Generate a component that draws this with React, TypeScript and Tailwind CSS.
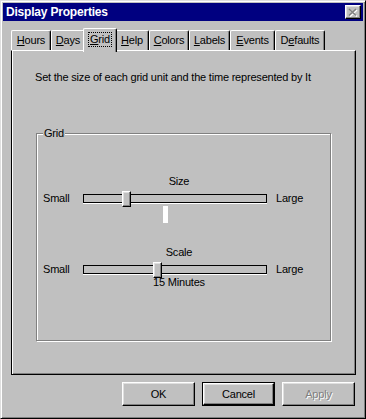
import React from "react";

const raised =
  "border border-t-white border-l-white border-r-black border-b-black shadow-[inset_-1px_-1px_#808080,inset_1px_1px_#dfdfdf]";

const tabs: { label: string; u: number; w: string }[] = [
  { label: "Hours", u: 0, w: "w-[40px]" },
  { label: "Days", u: 0, w: "w-[34px]" },
  { label: "Grid", u: 0, w: "w-[30px]" },
  { label: "Help", u: 0, w: "w-[34px]" },
  { label: "Colors", u: 0, w: "w-[40px]" },
  { label: "Labels", u: 0, w: "w-[41px]" },
  { label: "Events", u: 0, w: "w-[45px]" },
  { label: "Defaults", u: 1, w: "w-[50px]" },
];

function Mnemonic({ text, u }: { text: string; u: number }) {
  return (
    <>
      {text.slice(0, u)}
      <span className="underline underline-offset-[1px]">{text[u]}</span>
      {text.slice(u + 1)}
    </>
  );
}

function Slider({
  label,
  thumb,
  caption,
}: {
  label: string;
  thumb: number;
  caption?: React.ReactNode;
}) {
  return (
    <div className="flex flex-col">
      <div className="ml-[40px] w-[192px] text-center h-[13px] leading-[13px]">{label}</div>
      <div className="flex items-center h-[16px] mt-[2px]">
        <span className="w-[40px] leading-[13px]">Small</span>
        <div className="relative w-[184px] h-[9px] border border-black shadow-[0_1px_0_white] bg-[#c0c0c0]">
          <div
            className={`absolute top-[-4px] w-[9px] h-[16px] bg-[#c0c0c0] ${raised}`}
            style={{ left: thumb - 1 }}
          />
        </div>
        <span className="ml-[9px] leading-[13px]">Large</span>
      </div>
      {caption}
    </div>
  );
}

export default function App() {
  return (
    <div
      className="w-[366px] h-[419px] bg-[#c0c0c0] border border-t-[#dfdfdf] border-l-[#dfdfdf] border-r-black border-b-black shadow-[inset_1px_1px_white,inset_-1px_-1px_#808080] p-[2px] flex flex-col text-black text-[11px] tracking-[-0.2px]"
      style={{ fontFamily: '"Liberation Sans", Arial, sans-serif' }}
    >
      {/* title bar */}
      <div className="h-[18px] bg-[#000080] flex items-center justify-between pl-[3px] pr-[2px]">
        <span className="text-white font-bold text-[12px] leading-[14px]">Display Properties</span>
        <button className={`w-[16px] h-[14px] bg-[#c0c0c0] flex items-center justify-center ${raised}`}>
          <svg width="10" height="9" viewBox="0 0 10 9">
            <path d="M2 2 L9 8.5 M9 2 L2 8.5" stroke="white" strokeWidth="1.6" />
            <path d="M1 1 L8 7.5 M8 1 L1 7.5" stroke="#808080" strokeWidth="1.6" />
          </svg>
        </button>
      </div>

      {/* tabs */}
      <div className="mt-[7px] ml-[8px] flex items-end h-[22px]">
        {tabs.map((t) => {
          const sel = t.label === "Grid";
          return (
            <div
              key={t.label}
              className={[
                "flex items-center justify-center bg-[#c0c0c0] border-t border-l border-r border-t-white border-l-white border-r-black rounded-t-[2px] shadow-[inset_-1px_0_#808080]",
                sel
                  ? "relative z-10 h-[24px] -mb-[2px] -mx-[2px] w-[34px] pb-[3px]"
                  : `h-[20px] ${t.w}`,
              ].join(" ")}
            >
              <span
                className={
                  sel
                    ? "outline-1 outline-dotted outline-black px-[1px] leading-[13px]"
                    : "leading-[13px]"
                }
              >
                <Mnemonic text={t.label} u={t.u} />
              </span>
            </div>
          );
        })}
      </div>

      {/* panel */}
      <div className="ml-[8px] mr-[7px] h-[325px] border border-t-white border-l-black border-r-black border-b-black shadow-[inset_1px_0_white,inset_-1px_-1px_#808080] flex flex-col pl-[23px] pt-[20px]">
        <div className="leading-[13px]">
          Set the size of each grid unit and the time represented by It
        </div>
        <div className="relative mt-[49px] ml-[1px] w-[295px] h-[208px] border border-[#808080] shadow-[1px_1px_white,inset_1px_1px_white] pl-[6px] pt-[41px]">
          <span className="absolute left-[6px] top-[-7px] bg-[#c0c0c0] px-[1px] leading-[13px]">
            Grid
          </span>
          <Slider
            label="Size"
            thumb={39}
            caption={<div className="ml-[120px] w-[5px] h-[17px] bg-white" />}
          />
          <div className="mt-[23px]">
            <Slider
              label="Scale"
              thumb={70}
              caption={
                <div className="ml-[40px] w-[192px] text-center -mt-[1px] leading-[13px]">
                  15 Minutes
                </div>
              }
            />
          </div>
        </div>
      </div>

      {/* buttons */}
      <div className="mt-[7px] flex justify-end gap-[7px] pr-[8px]">
        <button className={`w-[73px] h-[24px] bg-[#c0c0c0] ${raised}`}>OK</button>
        <button className="w-[73px] h-[24px] bg-[#c0c0c0] border border-black">
          <div className={`w-full h-full flex items-center justify-center ${raised}`}>Cancel</div>
        </button>
        <button
          className={`w-[73px] h-[24px] bg-[#c0c0c0] text-[#808080] [text-shadow:1px_1px_0_white] ${raised}`}
        >
          Apply
        </button>
      </div>
    </div>
  );
}
